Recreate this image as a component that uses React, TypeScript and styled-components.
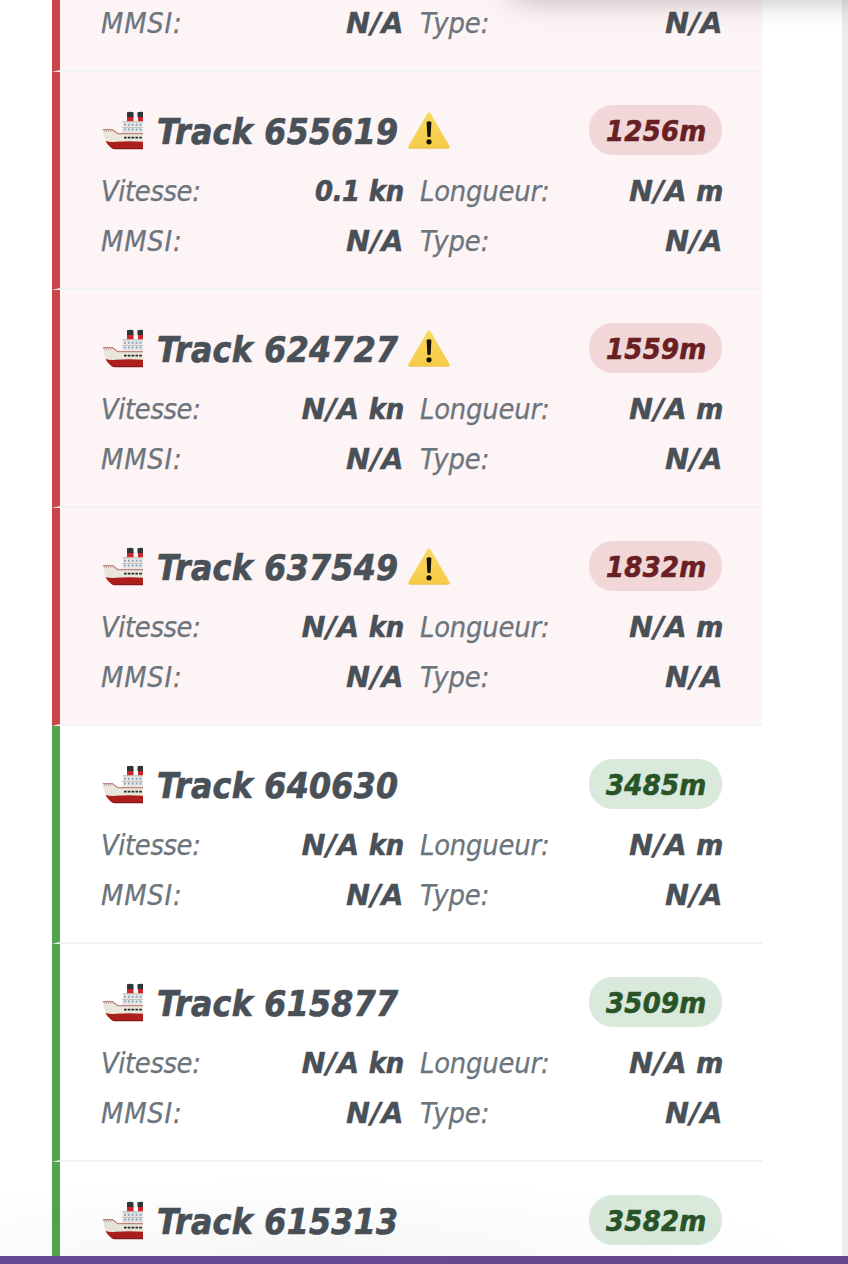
import React from 'react';
import styled, { createGlobalStyle, css } from 'styled-components';

const GlobalStyle = createGlobalStyle`
  * { box-sizing: border-box; }
  body {
    margin: 0;
    background: #fff;
    font-family: 'DejaVu Sans', sans-serif;
    overflow: hidden;
  }
`;

type Level = 'danger' | 'safe';

const palette = {
  danger: { edge: '#cb444a', row: '#fdf4f5', pill: '#f2d7d9', ink: '#692024' },
  safe: { edge: '#52a44f', row: 'transparent', pill: '#d9eadc', ink: '#285428' },
};

const condensed = css`
  font-family: 'DejaVu Sans Condensed', 'DejaVu Sans', sans-serif;
  font-stretch: condensed;
`;

const Page = styled.div`
  position: relative;
  display: flex;
  flex-direction: column;
  height: 1264px;
  overflow: hidden;
`;

const Main = styled.main`
  display: flex;
  justify-content: space-between;
  flex: 1;
  min-height: 0;
  overflow: hidden;
`;

const TrackList = styled.div`
  width: 710px;
  margin-left: 52px;
`;

const SideStrip = styled.div`
  width: 6px;
  background: #ebedef;
`;

const Footer = styled.div`
  flex: none;
  height: 8px;
  background: linear-gradient(90deg, #644a93, #67468e);
`;

const TopShadow = styled.div`
  position: absolute;
  left: 511px;
  right: -60px;
  top: -70px;
  height: 60px;
  border-radius: 16px;
  box-shadow: 0 8px 32px rgba(0, 0, 0, 0.3);
  pointer-events: none;
`;

const BottomShade = styled.div`
  position: absolute;
  left: 0;
  right: 6px;
  bottom: 8px;
  height: 80px;
  background: radial-gradient(ellipse 520px 80px at 300px 100%, rgba(0, 0, 0, 0.035), transparent);
  pointer-events: none;
`;

const Item = styled.article<{ $level: Level; $part?: 'tail' | 'head' }>`
  height: ${p => (p.$part === 'tail' ? 72 : p.$part === 'head' ? 94 : 218)}px;
  padding: ${p => (p.$part === 'tail' ? 4 : 32)}px 40px 0;
  border-left: 8px solid ${p => palette[p.$level].edge};
  border-bottom: ${p => (p.$part === 'head' ? 'none' : '2px solid #f1f2f4')};
  background: ${p => palette[p.$level].row};
  font-style: italic;
`;

const Header = styled.header`
  display: flex;
  align-items: center;
  justify-content: space-between;
  height: 52px;
  margin-bottom: 16px;
`;

const Title = styled.h3`
  display: flex;
  align-items: center;
  margin: 0;
  font-size: 35.2px;
  line-height: 52px;
  font-weight: 700;
  color: #495057;
  white-space: nowrap;
`;

const TitleText = styled.span`
  ${condensed}
  width: 242px;
  margin: 0 9px 0 14px;
  padding-top: 3px;
  letter-spacing: 0.3px;
  -webkit-text-stroke: 0.7px;
`;

const Pill = styled.span<{ $level: Level }>`
  ${condensed}
  width: 133px;
  height: 50px;
  padding-left: 17px;
  border-radius: 24px;
  font-size: 28.8px;
  line-height: 52px;
  letter-spacing: 0.3px;
  font-weight: 700;
  -webkit-text-stroke: 0.6px;
  background: ${p => palette[p.$level].pill};
  color: ${p => palette[p.$level].ink};
`;

const Details = styled.div`
  display: grid;
  grid-template-columns: 1fr 1fr;
  gap: 16px;
  font-size: 28.8px;
  line-height: 39px;
`;

const Field = styled.div`
  display: flex;
  justify-content: space-between;
  height: 34px;
  padding-left: 1px;
  white-space: nowrap;
`;

const Label = styled.span<{ $spacing: number }>`
  ${condensed}
  color: #6c757d;
  letter-spacing: ${p => p.$spacing}px;
  -webkit-text-stroke: 0.25px;
`;

const Value = styled.strong`
  margin-right: -1px;
  color: #495057;
  letter-spacing: 0.4px;
  -webkit-text-stroke: 0.3px;
`;

const Digits = styled.span`
  ${condensed}
  letter-spacing: -0.4px;
  -webkit-text-stroke: 0.6px;
`;

const Unit = styled.span`
  ${condensed}
  margin-left: 9px;
  letter-spacing: -0.2px;
  -webkit-text-stroke: 0.6px;
`;

const ShipIcon = () => (
  <svg width="43" height="42" viewBox="0 0 43 42" aria-hidden="true">
    <path d="M27 7h6.500v7H27zM38 7h5v7h-5z" fill="#c8262c" />
    <path d="M27 3.300q3.200-1 6.500 0V8H27zM37.500 3.300q3-1 5.500-.4V8h-5.500z" fill="#2f3638" />
    <path d="M23 12.500h20v12H22z" fill="#e9e7e4" />
    <path d="M22.500 12.200H43v1.100H22.500zM22 18.100h21v.7H22z" fill="#c5b6b2" />
    <path d="M24 15.800h19M24 20.500h19" stroke="#7fa0c0" strokeWidth="2" strokeDasharray="1.700 2.200" />
    <path d="M2.800 20.500H13l5 4h25v9.500H6.500Q3.200 27 2.800 20.500z" fill="#e9e6db" />
    <path d="M2.800 20.700H12.500l5.200 4H43" fill="none" stroke="#c48482" strokeWidth="1.300" />
    <path d="M4 22h8" stroke="#8b6f64" strokeWidth=".8" strokeDasharray="1 1" />
    <path d="M24 28.600h19" stroke="#242a2b" strokeWidth="1.900" strokeDasharray="2.600 1.200" />
    <path d="M5.500 32q5 1.300 10 .7 13-.7 27.500 0V40H14Q8.500 38 5.500 32z" fill="#ad1f1c" />
    <path d="M10 37.800q2 2 4.500 2.500H43v-1H16q-3-.2-6-1.500z" fill="#7f1820" />
  </svg>
);

const WarningIcon = () => (
  <svg width="42" height="40" viewBox="0 0 42 40" aria-hidden="true">
    <defs>
      <linearGradient id="warn" x2="0" y2="1">
        <stop stopColor="#f8d95f" />
        <stop offset="1" stopColor="#f7cb48" />
      </linearGradient>
    </defs>
    <path d="M21 4.200 40 36.900H2z" fill="url(#warn)" stroke="url(#warn)" strokeWidth="3.400" strokeLinejoin="round" />
    <path d="M1.500 38.100h39" stroke="#e9bf4b" strokeWidth=".8" strokeLinecap="round" />
    <path d="M18.600 12q2.400-1.500 4.800 0l-.8 14.500q-1.600 1-3.200 0z" fill="#161307" />
    <circle cx="21" cy="31.800" r="2.600" fill="#161307" />
  </svg>
);

interface Track {
  id: string;
  distance: string;
  speed?: string;
  level: Level;
  headOnly?: boolean;
}

const tracks: Track[] = [
  { id: '655619', distance: '1256m', speed: '0.1', level: 'danger' },
  { id: '624727', distance: '1559m', level: 'danger' },
  { id: '637549', distance: '1832m', level: 'danger' },
  { id: '640630', distance: '3485m', level: 'safe' },
  { id: '615877', distance: '3509m', level: 'safe' },
  { id: '615313', distance: '3582m', level: 'safe', headOnly: true },
];

const IdentityFields = () => (
  <>
    <Field><Label $spacing={0.8}>MMSI:</Label><Value>N/A</Value></Field>
    <Field><Label $spacing={-0.1}>Type:</Label><Value>N/A</Value></Field>
  </>
);

const TrackItem = ({ id, distance, speed, level, headOnly }: Track) => (
  <Item $level={level} $part={headOnly ? 'head' : undefined}>
    <Header>
      <Title>
        <ShipIcon />
        <TitleText>Track {id}</TitleText>
        {level === 'danger' && <WarningIcon />}
      </Title>
      <Pill $level={level}>{distance}</Pill>
    </Header>
    {!headOnly && (
      <Details>
        <Field>
          <Label $spacing={-0.4}>Vitesse:</Label>
          <Value>{speed ? <Digits>{speed}</Digits> : 'N/A'}<Unit>kn</Unit></Value>
        </Field>
        <Field>
          <Label $spacing={-0.2}>Longueur:</Label>
          <Value>N/A<Unit>m</Unit></Value>
        </Field>
        <IdentityFields />
      </Details>
    )}
  </Item>
);

export default function App() {
  return (
    <Page>
      <GlobalStyle />
      <Main>
        <TrackList>
          <Item $level="danger" $part="tail">
            <Details><IdentityFields /></Details>
          </Item>
          {tracks.map(t => <TrackItem key={t.id} {...t} />)}
        </TrackList>
        <SideStrip />
      </Main>
      <Footer />
      <TopShadow />
      <BottomShade />
    </Page>
  );
}
